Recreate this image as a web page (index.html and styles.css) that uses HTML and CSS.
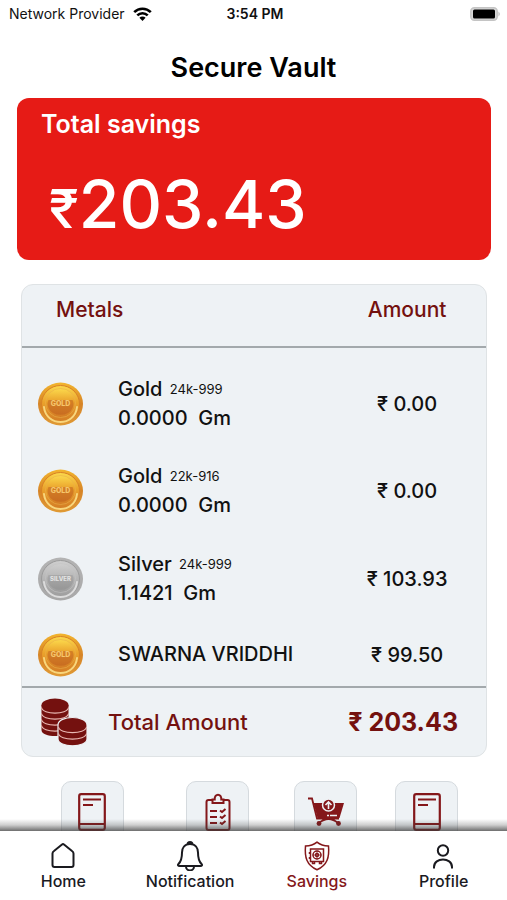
FILE: index.html
```
<!DOCTYPE html>
<html lang="en">
<head>
<meta charset="utf-8">
<meta name="viewport" content="width=device-width, initial-scale=1">
<title>Secure Vault</title>
<link rel="stylesheet" href="styles.css">
</head>
<body>
<svg class="defs" width="0" height="0" aria-hidden="true">
  <defs>
    <linearGradient id="goldRim" x1="0" y1="0" x2="0" y2="1">
      <stop offset="0" stop-color="#f3b52e"/><stop offset=".5" stop-color="#d68427"/><stop offset="1" stop-color="#e09a34"/>
    </linearGradient>
    <linearGradient id="goldFace" x1="0" y1="0" x2="0" y2="1">
      <stop offset="0" stop-color="#fbd94c"/><stop offset=".45" stop-color="#eaa22c"/><stop offset="1" stop-color="#d27a24"/>
    </linearGradient>
    <linearGradient id="silverRim" x1="0" y1="0" x2="0" y2="1">
      <stop offset="0" stop-color="#b4b4b4"/><stop offset="1" stop-color="#a8a8a8"/>
    </linearGradient>
    <linearGradient id="silverFace" x1="0" y1="0" x2="0" y2="1">
      <stop offset="0" stop-color="#cfcfcf"/><stop offset="1" stop-color="#9c9c9c"/>
    </linearGradient>
    <symbol id="gold" viewBox="0 0 46 44">
      <ellipse cx="22.500" cy="22" rx="22.5" ry="21.5" fill="url(#goldRim)"/>
      <ellipse cx="22.500" cy="22" rx="19" ry="18.5" fill="url(#goldFace)" stroke="#d98226"/>
      <path d="M6 25c2 20 31 20 33 0" fill="none" stroke="#f8d67c" stroke-width="2" stroke-linecap="round"/>
      <ellipse cx="22.500" cy="21" rx="15" ry="14.500" fill="url(#goldFace)" stroke="#eab04a" stroke-width=".6"/>
      <path d="M10.500 18h24q2 4 0 8a12.500 9.500 0 0 1-24 0q-2-4 0-8z" fill="#b9541c" opacity=".45"/>
      <text x="22.500" y="24" class="coin-text" fill="#f6c66c">GOLD</text>
    </symbol>
    <symbol id="silver" viewBox="0 0 46 44">
      <ellipse cx="22.500" cy="22" rx="22.5" ry="21.5" fill="url(#silverRim)"/>
      <ellipse cx="22.500" cy="22" rx="19" ry="18.5" fill="url(#silverFace)" stroke="#9b9b9b"/>
      <path d="M6 25c2 20 31 20 33 0" fill="none" stroke="#dcdcdc" stroke-width="2" stroke-linecap="round"/>
      <ellipse cx="22.500" cy="21" rx="15" ry="14.500" fill="url(#silverFace)" stroke="#c4c4c4" stroke-width=".6"/>
      <path d="M10.500 18h24q2 4 0 8a12.500 9.500 0 0 1-24 0q-2-4 0-8z" fill="#777" opacity=".25"/>
      <text x="22.500" y="24" class="coin-text silver-text" fill="#e2e2e2">SILVER</text>
    </symbol>
    <symbol id="book" viewBox="0 0 28 38">
      <rect x="1.2" y="1.2" width="25.6" height="35.6" rx="2" fill="none" stroke="currentColor" stroke-width="2.2"/>
      <path d="M1 31h26M5 6.500h18M5 12h10" fill="none" stroke="currentColor" stroke-width="2"/>
    </symbol>
  </defs>
</svg>

<header class="status">
  <div class="carrier">Network Provider
    <svg width="19" height="14" viewBox="0 0 19 14" aria-hidden="true"><g fill="none" stroke="#000" stroke-width="2.6"><path d="M1.200 5.200a11.800 11.800 0 0 1 16.600 0"/><path d="M4.300 8.400a7.400 7.400 0 0 1 10.400 0"/></g><path d="M9.500 14L6.400 10.700a4.400 4.400 0 0 1 6.200 0z"/></svg>
  </div>
  <time>3:54 PM</time>
  <svg class="battery" width="31" height="14" viewBox="0 0 31 14" aria-hidden="true"><rect x=".8" y=".8" width="26.400" height="12.400" rx="3.500" fill="#d8d8d8" stroke="#c4c4c4" stroke-width="1.400"/><rect x="3" y="2.500" width="22" height="9" rx="1.500"/><path d="M28.500 4.500q2.500 2.500 0 5z" fill="#b8b8b8"/></svg>
</header>

<main>
  <h1>Secure Vault</h1>

  <section class="savings">
    <h2>Total savings</h2>
    <p><span class="rupee">₹</span>203.43</p>
  </section>

  <div class="holdings">
    <table>
      <colgroup><col class="col-icon"><col><col class="col-amount"></colgroup>
      <thead>
        <tr><th colspan="2" scope="col" class="metals">Metals</th><th scope="col">Amount</th></tr>
      </thead>
      <tbody>
        <tr><td><svg class="coin"><use href="#gold"/></svg></td><td class="metal">Gold <small>24k-999</small><br>0.0000&nbsp; Gm</td><td class="amount">₹ 0.00</td></tr>
        <tr><td><svg class="coin"><use href="#gold"/></svg></td><td class="metal">Gold <small>22k-916</small><br>0.0000&nbsp; Gm</td><td class="amount">₹ 0.00</td></tr>
        <tr><td><svg class="coin"><use href="#silver"/></svg></td><td class="metal">Silver <small>24k-999</small><br>1.1421&nbsp; Gm</td><td class="amount">₹ 103.93</td></tr>
        <tr class="scheme"><td><svg class="coin"><use href="#gold"/></svg></td><td class="metal">SWARNA VRIDDHI</td><td class="amount">₹ 99.50</td></tr>
      </tbody>
      <tfoot>
        <tr>
          <td><svg class="stack" width="46" height="48" viewBox="0 0 46 48" aria-hidden="true"><g fill="#74110f"><path d="M.5 7v25c0 8 27 8 27 0V7z"/><ellipse cx="14" cy="7" rx="13.500" ry="6.500"/></g><path d="M.5 9.500c1 7.500 26 7.500 27 0M.5 15.500c1 7.500 26 7.500 27 0M.5 21.500c1 7.500 26 7.500 27 0M.5 27.500c1 7.500 26 7.500 27 0" fill="none" stroke="#e9b9b4" stroke-width="1.100"/><path d="M17 27c0-10 29-10 29 0v14c0 9-29 9-29 0z" fill="#74110f" stroke="#eef2f5" stroke-width="1.200"/><path d="M17.500 29c1 7.500 27 7.500 28 0M17.500 35.500c1 7.500 27 7.500 28 0" fill="none" stroke="#e9b9b4" stroke-width="1.100"/></svg></td>
          <th scope="row">Total Amount</th>
          <td class="total">₹ 203.43</td>
        </tr>
      </tfoot>
    </table>
  </div>

  <div class="shortcuts">
    <button type="button" aria-label="Passbook"><svg width="28" height="38"><use href="#book"/></svg></button>
    <button type="button" aria-label="Schemes"><svg width="26" height="38" viewBox="0 0 26 38"><g fill="none" stroke="currentColor" stroke-width="2"><rect x="1.500" y="7" width="23" height="30" rx="2"/><path d="M7.500 10V6.500h2.200c-.5-6.500 7.100-6.500 6.600 0h2.200V10z" fill="#eef2f5"/><path d="M5 18h7M5 24h7M5 30h7"/><path d="M15 17.500l2 1.500 3.500-3M15 23.500l2 1.500 3.500-3M15 29.500l2 1.500 3.500-3"/></g></svg></button>
    <button type="button" aria-label="Buy"><svg width="36" height="30" viewBox="0 0 36 30"><g fill="none" stroke="currentColor" stroke-width="1.800"><path d="M0 1.500h4l5 20h22M11 26q9.500-8 19 0"/></g><path d="M5.500 6H36l-4.500 15H9.500z" fill="currentColor"/><path d="M19 18.500h10" stroke="#eef2f5" stroke-width="1.300" stroke-dasharray="2 1 7"/><circle cx="20.500" cy="8" r="6" fill="currentColor" stroke="#eef2f5" stroke-width="1.500"/><path d="M20.500 12V5M17.500 8l3-3 3 3" fill="none" stroke="#eef2f5" stroke-width="1.600"/><circle cx="11" cy="26.500" r="2.400" fill="currentColor"/><circle cx="30.500" cy="26.500" r="2.400" fill="currentColor"/></svg></button>
    <button type="button" aria-label="Statement"><svg width="28" height="38"><use href="#book"/></svg></button>
  </div>
</main>

<nav>
  <a href="#home"><svg width="30" height="30" viewBox="0 0 30 30"><path d="M4.500 12.500Q4.500 11 6 10l8-6.500q1-.8 2 0l8 6.500q1.500 1 1.500 2.500V24q0 2-2 2h-17q-2 0-2-2z"/></svg>Home</a>
  <a href="#notification"><svg width="30" height="30" viewBox="0 0 30 30"><path d="M12.500 3.500a2.500 2.500 0 0 1 5 0M15 3c-5.500 0-8 4-8 8.500 0 6-1 9-3.500 11.500-1 1-.5 2 1 2h21c1.500 0 2-1 1-2-2.500-2.500-3.500-5.500-3.500-11.500C23 7 20.500 3 15 3zM11 25.500a4 4 0 0 0 8 0"/></svg>Notification</a>
  <a href="#savings" class="active" aria-current="page"><svg width="30" height="30" viewBox="0 0 30 30"><g stroke-width="1.500"><path d="M15 1.200c3 2.500 7 3.800 11.500 3.800 1 11-1 19-11.500 23.800C4.500 24 2.500 16 3.500 5 8 5 12 3.700 15 1.200z"/><path d="M8.500 8h13v12.500h-13zM10.500 20.500v2h2v-2M17.500 20.500v2h2v-2M7.500 11v2M7.500 16v2"/><circle cx="15" cy="14" r="4"/><circle cx="15" cy="14" r="1.500"/><path d="M15 9.500v9M10.500 14h9" stroke-width=".8"/></g></svg>Savings</a>
  <a href="#profile"><svg width="30" height="30" viewBox="0 0 30 30"><circle cx="14" cy="9.500" r="5.200"/><path d="M5 27.500v-1.500c0-10 18-10 18 0v1.500"/></svg>Profile</a>
</nav>
</body>
</html>
```
FILE: styles.css
```
* { box-sizing: border-box; }

body {
  margin: 0;
  height: 100vh;
  display: flex;
  flex-direction: column;
  background: #fff;
  color: #111;
  font-family: Inter, "Open Sans", sans-serif;
  font-weight: 500;
}

svg { display: block; }
.defs { position: absolute; }

.status {
  display: grid;
  grid-template-columns: 1fr auto 1fr;
  align-items: center;
  height: 27px;
  padding: 0 6px 0 9px;
  font-size: 14px;
  font-weight: 400;
}
.carrier { display: flex; align-items: center; gap: 8px; white-space: nowrap; }
.status time { font-weight: 600; }
.battery { justify-self: end; }

main {
  flex: 1;
  min-height: 0;
  overflow-y: auto;
  scrollbar-width: none;
}

h1 {
  margin: 25px 0 14px;
  font-size: 27px;
  line-height: 32px;
  font-weight: 600;
  text-align: center;
  color: #000;
}

.savings {
  margin: 0 16px 24px 17px;
  height: 162px;
  padding: 10px 24px;
  border-radius: 12px;
  background: #e61b16;
  color: #fff;
}
.savings h2 { margin: 0; font-size: 25px; line-height: 32px; font-weight: 600; }
.savings p { margin: 24px 0 0; padding-left: 8px; font-size: 66px; line-height: 80px; }
.rupee { font-size: 54px; }

.holdings {
  margin: 0 20px 24px 21px;
  border: 1px solid #dfe3e5;
  border-radius: 12px;
  background: #eef2f5;
}
table { width: 100%; table-layout: fixed; border-collapse: collapse; }
.col-icon { width: 86px; }
.col-amount { width: 34%; }
th, td { padding: 0; font-weight: 500; font-size: 20px; }
thead th { height: 62px; padding-bottom: 12px; border-bottom: 2px solid #a3a9ac; color: #74110f; font-size: 21px; }
th.metals { padding-left: 34px; text-align: left; }
tbody td { height: 88px; }
tbody tr:first-child td { height: 100px; padding-top: 12px; }
tbody .scheme td { height: 64px; }
.coin { width: 46px; height: 44px; margin-left: 16px; }
.coin-text { font-size: 7px; font-weight: 800; text-anchor: middle; }
.silver-text { font-size: 6px; }
.metal { padding-left: 10px; line-height: 29px; white-space: nowrap; }
.metal small { font-size: 13px; font-weight: 400; vertical-align: 2px; margin-left: 2px; }
.amount, .total { text-align: center; white-space: nowrap; }
.total { padding-right: 8px; }
tfoot td, tfoot th { height: 69px; border-top: 2px solid #a3a9ac; color: #74110f; }
tfoot th { text-align: left; font-size: 22px; }
.stack { margin-left: 19px; }
tfoot .total { font-size: 25px; font-weight: 700; }

.shortcuts {
  display: grid;
  grid-template-columns: 134fr 117fr 99fr 103fr;
  justify-items: center;
  padding: 0 29px 24px 25px;
}
.shortcuts button {
  width: 63px;
  height: 62px;
  padding: 0;
  display: grid;
  place-items: center;
  border: 1px solid #d5dade;
  border-radius: 10px;
  background: #eef2f5;
  color: #84171a;
}

nav {
  position: relative;
  display: grid;
  grid-template-columns: repeat(4, 1fr);
  height: 69px;
  padding-top: 10px;
  background: #fff;
}
nav::before {
  content: "";
  position: absolute;
  inset: -12px 0 auto;
  height: 12px;
  background: linear-gradient(rgba(60, 60, 60, 0), rgba(60, 60, 60, .25) 50%, rgba(60, 60, 60, .75));
}
nav a {
  display: flex;
  flex-direction: column;
  align-items: center;
  color: #1a1a1f;
  font-size: 16px;
  line-height: 20px;
  text-decoration: none;
}
nav svg { fill: none; stroke: currentColor; stroke-width: 2; }
nav .active { color: #84171a; }
```
